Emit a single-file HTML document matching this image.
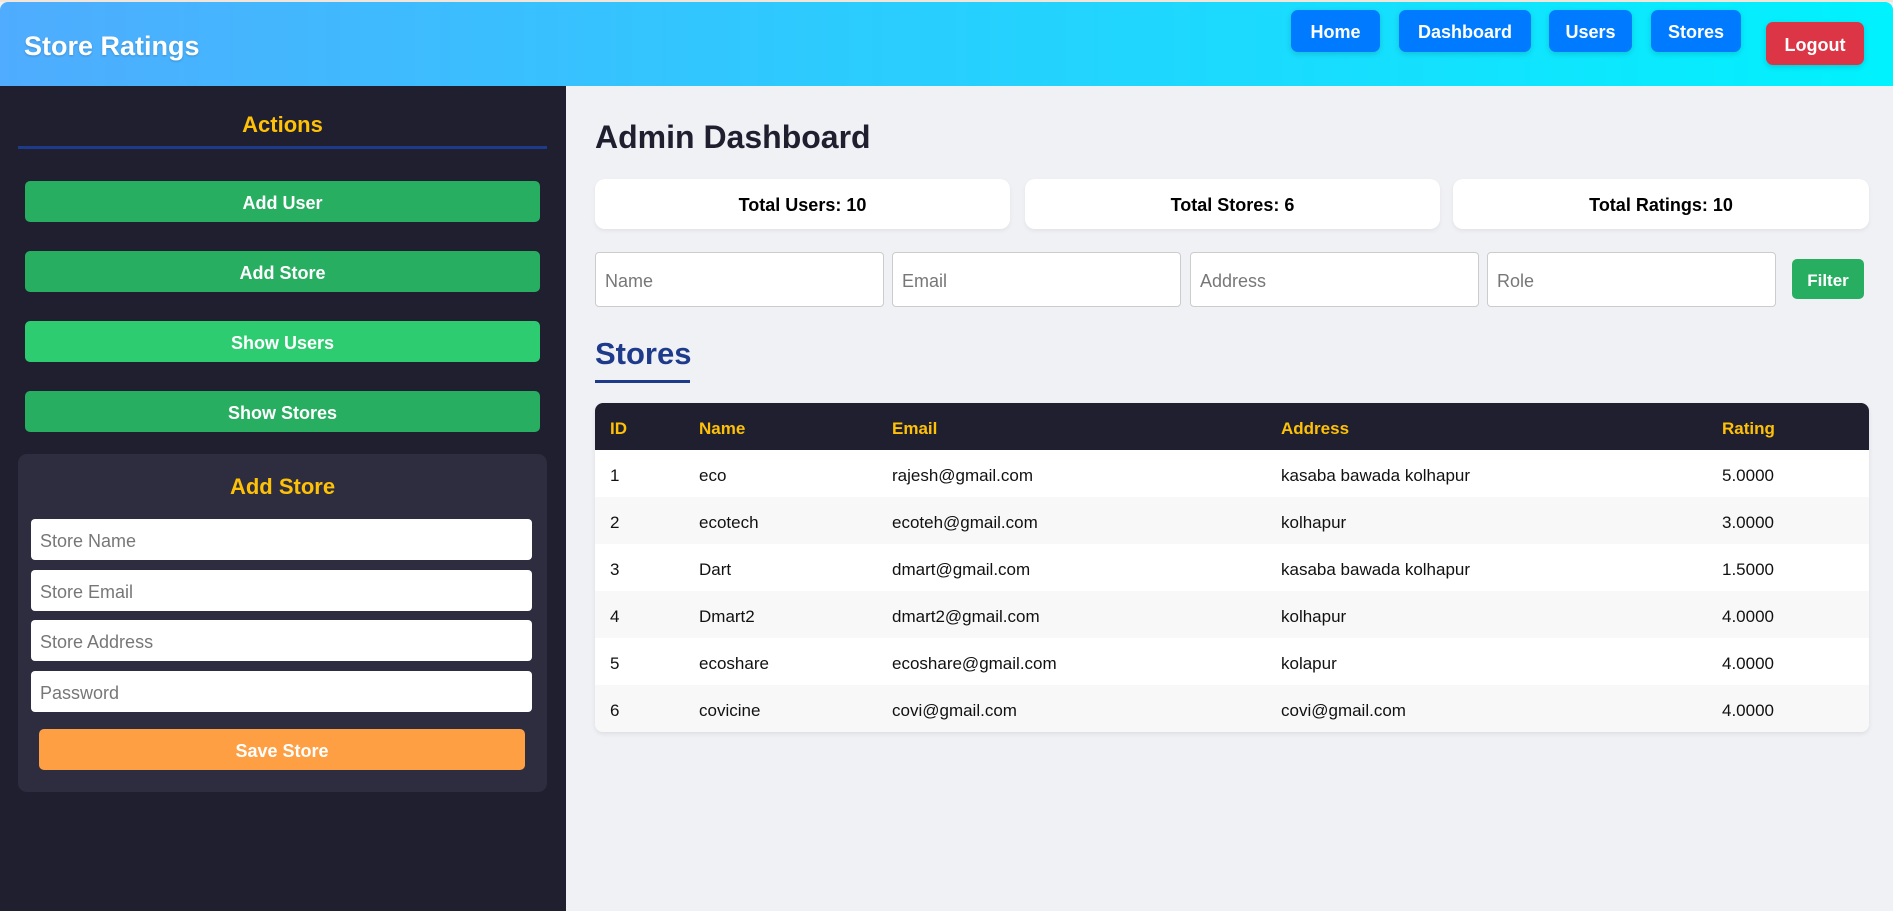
<!DOCTYPE html>
<html><head><meta charset="utf-8"><style>
*{box-sizing:border-box;margin:0;padding:0}
body{width:1893px;height:911px;overflow:hidden;background:#f0f1f5;font-family:"Liberation Sans",sans-serif;position:relative}
.a{position:absolute}
.hdr{left:0;top:2px;width:1893px;height:84px;background:linear-gradient(90deg,#4facfe,#00f2fe);border-radius:8px 8px 0 0}
.top{left:0;top:0;width:1893px;height:2px;background:#f3e6d8}
.nav{background:#007bff;color:#fff;font-weight:bold;font-size:18px;border-radius:7px;display:flex;align-items:center;justify-content:center;box-shadow:0 2px 6px rgba(0,0,0,.15);padding-top:3px}
.side{left:0;top:86px;width:566px;height:825px;background:#1f1f2f}
.btn{left:25px;width:515px;height:41px;border-radius:5px;background:#27ae60;color:#fff;font-weight:bold;font-size:18px;display:flex;align-items:center;justify-content:center;padding-top:3px}
.inp{left:31px;width:501px;height:41px;background:#fff;border-radius:4px;color:#777;font-size:18px;padding-left:9px;display:flex;align-items:center;padding-top:3px}
.card{top:179px;height:50px;background:#fff;border-radius:10px;box-shadow:0 2px 5px rgba(0,0,0,.06);font-weight:bold;font-size:18px;display:flex;align-items:center;justify-content:center;color:#000;padding-top:3px}
.fi{top:252px;height:55px;background:#fff;border:1px solid #ccc;border-radius:4px;color:#777;font-size:18px;padding-left:9px;display:flex;align-items:center;padding-top:3px}
.tbl{left:595px;top:403px;width:1274px;height:329px;border-radius:8px;overflow:hidden;background:#fff;box-shadow:0 2px 5px rgba(0,0,0,.08)}
.row{position:absolute;left:0;width:1274px;height:47px;font-size:17px;color:#111}
.row span{position:absolute;top:2px;line-height:47px}
.th{background:#1f1f2f;color:#ffc107;font-weight:bold}
</style></head><body>
<div class="a top"></div>
<div class="a hdr"></div>
<div class="a" style="left:24px;top:31px;color:#fff;font-weight:bold;font-size:27px;text-shadow:0 1px 2px rgba(0,0,0,.2)">Store Ratings</div>
<div class="a nav" style="left:1291px;top:10px;width:89px;height:42px">Home</div>
<div class="a nav" style="left:1399px;top:10px;width:132px;height:42px">Dashboard</div>
<div class="a nav" style="left:1549px;top:10px;width:83px;height:42px">Users</div>
<div class="a nav" style="left:1651px;top:10px;width:90px;height:42px">Stores</div>
<div class="a nav" style="left:1766px;top:22px;width:98px;height:43px;background:#dc3545">Logout</div>

<div class="a side"></div>
<div class="a" style="left:18px;top:112px;width:529px;text-align:center;color:#ffc107;font-weight:bold;font-size:22px">Actions</div>
<div class="a" style="left:18px;top:146px;width:529px;height:3px;background:#1e3a8a"></div>
<div class="a btn" style="top:181px">Add User</div>
<div class="a btn" style="top:251px">Add Store</div>
<div class="a btn" style="top:321px;background:#2ecc71">Show Users</div>
<div class="a btn" style="top:391px">Show Stores</div>
<div class="a" style="left:18px;top:454px;width:529px;height:338px;background:#2d2d3f;border-radius:9px"></div>
<div class="a" style="left:18px;top:474px;width:529px;text-align:center;color:#ffc107;font-weight:bold;font-size:22px">Add Store</div>
<div class="a inp" style="top:519px">Store Name</div>
<div class="a inp" style="top:570px">Store Email</div>
<div class="a inp" style="top:620px">Store Address</div>
<div class="a inp" style="top:671px">Password</div>
<div class="a btn" style="left:39px;width:486px;top:729px;background:#ff9f43">Save Store</div>

<div class="a" style="left:595px;top:119px;font-weight:bold;font-size:32px;color:#1f1f2f">Admin Dashboard</div>
<div class="a card" style="left:595px;width:415px">Total Users: 10</div>
<div class="a card" style="left:1025px;width:415px">Total Stores: 6</div>
<div class="a card" style="left:1453px;width:416px">Total Ratings: 10</div>
<div class="a fi" style="left:595px;width:289px">Name</div>
<div class="a fi" style="left:892px;width:289px">Email</div>
<div class="a fi" style="left:1190px;width:289px">Address</div>
<div class="a fi" style="left:1487px;width:289px">Role</div>
<div class="a" style="left:1792px;top:259px;width:72px;height:40px;background:#27ae60;color:#fff;font-weight:bold;font-size:17px;border-radius:5px;display:flex;align-items:center;justify-content:center;padding-top:3px">Filter</div>
<div class="a" style="left:595px;top:336px;font-weight:bold;font-size:31px;color:#1e3a8a">Stores</div>
<div class="a" style="left:595px;top:380px;width:95px;height:3px;background:#1e3a8a"></div>

<div class="a tbl">
<div class="row th" style="top:0"><span style="left:15px">ID</span><span style="left:104px">Name</span><span style="left:297px">Email</span><span style="left:686px">Address</span><span style="left:1127px">Rating</span></div>
<div class="row" style="top:47px"><span style="left:15px">1</span><span style="left:104px">eco</span><span style="left:297px">rajesh@gmail.com</span><span style="left:686px">kasaba bawada kolhapur</span><span style="left:1127px">5.0000</span></div>
<div class="row" style="top:94px;background:#f8f8f8"><span style="left:15px">2</span><span style="left:104px">ecotech</span><span style="left:297px">ecoteh@gmail.com</span><span style="left:686px">kolhapur</span><span style="left:1127px">3.0000</span></div>
<div class="row" style="top:141px"><span style="left:15px">3</span><span style="left:104px">Dart</span><span style="left:297px">dmart@gmail.com</span><span style="left:686px">kasaba bawada kolhapur</span><span style="left:1127px">1.5000</span></div>
<div class="row" style="top:188px;background:#f8f8f8"><span style="left:15px">4</span><span style="left:104px">Dmart2</span><span style="left:297px">dmart2@gmail.com</span><span style="left:686px">kolhapur</span><span style="left:1127px">4.0000</span></div>
<div class="row" style="top:235px"><span style="left:15px">5</span><span style="left:104px">ecoshare</span><span style="left:297px">ecoshare@gmail.com</span><span style="left:686px">kolapur</span><span style="left:1127px">4.0000</span></div>
<div class="row" style="top:282px;background:#f8f8f8"><span style="left:15px">6</span><span style="left:104px">covicine</span><span style="left:297px">covi@gmail.com</span><span style="left:686px">covi@gmail.com</span><span style="left:1127px">4.0000</span></div>
</div>
</body></html>
